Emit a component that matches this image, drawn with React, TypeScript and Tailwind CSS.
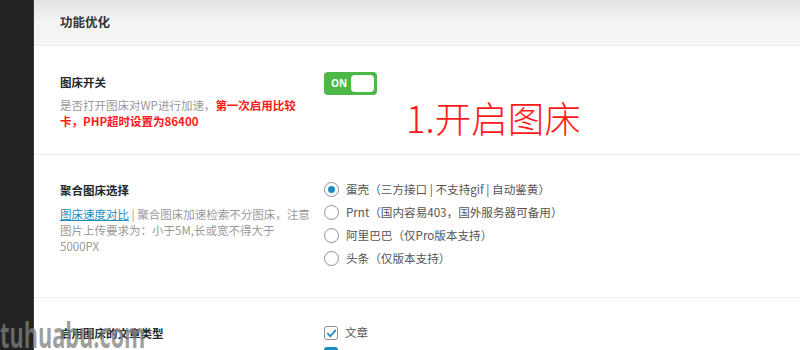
import React from "react";

const font = { fontFamily: '"Noto Sans CJK SC", "Noto Sans", sans-serif' };

function Radio({ checked, label }: { checked?: boolean; label: string }) {
  return (
    <div className="flex items-center h-[23px]">
      <span className="w-[15px] h-[15px] rounded-full border border-[#8c8f94] bg-white flex items-center justify-center shrink-0">
        {checked && <span className="w-[7px] h-[7px] rounded-full bg-[#1e8cbe]" />}
      </span>
      <span className="ml-[7px] text-[11.6px] text-[#555]">{label}</span>
    </div>
  );
}

export default function App() {
  return (
    <div className="relative w-[800px] h-[350px] overflow-hidden flex bg-white" style={font}>
      <div className="w-[34px] shrink-0 bg-[#222222] border-r border-[#3a3a3a]" />
      <div className="flex-1 flex flex-col">
        <div className="h-[46px] shrink-0 bg-gradient-to-b from-[#e4e4e4] via-[#f4f4f4] to-[#f5f5f5] border-b border-[#ebebeb] flex items-center pl-[26px]">
          <span className="text-[12.5px] font-bold text-[#333]">功能优化</span>
        </div>

        {/* Row 1 */}
        <div className="h-[109px] shrink-0 border-b border-[#eeeeee] flex pl-[26px] pt-[26px]">
          <div className="w-[264px] shrink-0">
            <div className="text-[11.5px] font-bold text-[#23282d] leading-[20px]">图床开关</div>
            <div className="mt-[5px] w-[238px] text-[11.5px] leading-[16px] text-[#999]">
              是否打开图床对WP进行加速，
              <span className="text-[#ff1a1a] font-bold">第一次启用比较卡，PHP超时设置为86400</span>
            </div>
          </div>
          <div>
            <div className="w-[53px] h-[23px] rounded-[4px] bg-[#4cb848] flex items-center pl-[7px] pr-[3px] justify-between">
              <span className="text-white text-[10px] font-bold" style={{ fontFamily: '"Open Sans", sans-serif' }}>ON</span>
              <span className="w-[23px] h-[17px] rounded-[4px] bg-white" />
            </div>
          </div>
        </div>

        {/* Row 2 */}
        <div className="h-[143px] shrink-0 border-b border-[#eeeeee] flex pl-[26px] pt-[25px]">
          <div className="w-[264px] shrink-0">
            <div className="text-[11.5px] font-bold text-[#23282d] leading-[20px]">聚合图床选择</div>
            <div className="mt-[6px] w-[252px] text-[11.5px] leading-[16px] text-[#999]">
              <span className="text-[#1e8cbe] underline">图床速度对比</span> | 聚合图床加速检索不分图床，注意图片上传要求为：小于5M,长或宽不得大于5000PX
            </div>
          </div>
          <div className="-mt-[2px]">
            <Radio checked label="蛋壳（三方接口 | 不支持gif | 自动鉴黄）" />
            <Radio label="Prnt（国内容易403，国外服务器可备用）" />
            <Radio label="阿里巴巴（仅Pro版本支持）" />
            <Radio label="头条（仅版本支持）" />
          </div>
        </div>

        {/* Row 3 */}
        <div className="flex-1 flex pl-[26px] pt-[25px]">
          <div className="w-[264px] shrink-0">
            <div className="text-[11.5px] font-bold text-[#23282d] leading-[20px]">启用图床的文章类型</div>
          </div>
          <div className="pt-[3px]">
            <div className="flex items-center h-[14px]">
              <span className="w-[14px] h-[14px] rounded-[3px] border border-[#8c8f94] bg-white flex items-center justify-center">
                <svg width="11" height="11" viewBox="0 0 12 12">
                  <path d="M2 6.2 L4.8 9 L10 2.8" fill="none" stroke="#1e8cbe" strokeWidth="2" strokeLinecap="round" strokeLinejoin="round" />
                </svg>
              </span>
              <span className="ml-[7px] text-[11.6px] text-[#555]">文章</span>
            </div>
            <div className="mt-[7px] w-[14px] h-[14px] rounded-[3px] bg-[#1e8cbe]" />
          </div>
        </div>
      </div>

      {/* annotation */}
      <div className="absolute left-[406px] top-[94px] text-[36.5px] font-light leading-[48px] text-[#ff1a1a]">1.开启图床</div>

      {/* watermark */}
      <div
        className="absolute left-[0px] top-[314px] text-[35px] font-bold leading-[42px] text-[#808080]/75 origin-left scale-x-[0.62] whitespace-nowrap"
        style={{ fontFamily: '"Open Sans", sans-serif' }}
      >
        tuhuabu.com
      </div>
    </div>
  );
}
